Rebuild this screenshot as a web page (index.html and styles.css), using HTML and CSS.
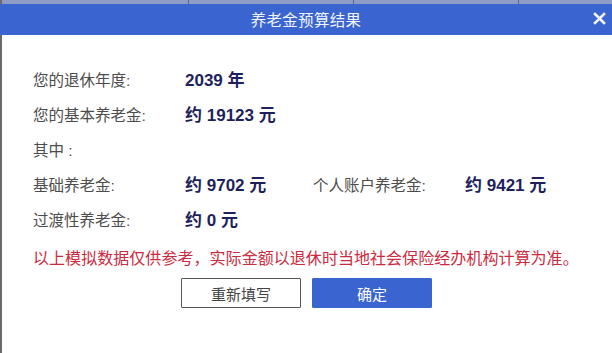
FILE: index.html
```html
<!DOCTYPE html>
<html lang="zh">
<head>
<meta charset="utf-8">
<title>养老金预算结果</title>
<link rel="stylesheet" href="styles.css">
</head>
<body>
<div class="dialog">
  <div class="topstrip"><span class="sep"></span><span class="sep"></span><span class="sep"></span></div>
  <div class="titlebar">
    <span class="title">养老金预算结果</span>
    <span class="close">
      <svg width="13" height="13" viewBox="0 0 13 13"><path d="M2 2 L11 11 M11 2 L2 11" stroke="#f4f6ff" stroke-width="2.6" stroke-linecap="square"/></svg>
    </span>
  </div>
  <div class="content">
    <div class="grid">
      <div class="label">您的退休年度:</div>
      <div class="value span3">2039 年</div>

      <div class="label">您的基本养老金:</div>
      <div class="value span3">约 19123 元</div>

      <div class="label span4">其中 :</div>

      <div class="label">基础养老金:</div>
      <div class="value">约 9702 元</div>
      <div class="label">个人账户养老金:</div>
      <div class="value">约 9421 元</div>

      <div class="label">过渡性养老金:</div>
      <div class="value span3">约 0 元</div>
    </div>
    <p class="note">以上模拟数据仅供参考，实际金额以退休时当地社会保险经办机构计算为准。</p>
    <div class="actions">
      <button class="btn btn-plain">重新填写</button>
      <button class="btn btn-primary">确定</button>
    </div>
  </div>
</div>
</body>
</html>
```

FILE: styles.css
```css
html, body {
  margin: 0;
  padding: 0;
  background: #ffffff;
}

body {
  width: 612px;
  height: 353px;
  overflow: hidden;
  font-family: "Liberation Sans", "Noto Sans CJK SC", sans-serif;
}

.dialog {
  height: 353px;
  border-left: 2px solid #6a6a6a;
  box-sizing: border-box;
  background: #ffffff;
}

.topstrip {
  height: 4px;
  background: #8e9cc6;
  display: flex;
  gap: 164px;
  padding-left: 186px;
}

.sep {
  width: 1px;
  background: #5a6690;
}

.titlebar {
  position: relative;
  height: 31px;
  background: #3a64d0;
  display: flex;
  align-items: center;
  justify-content: center;
  margin-left: -2px;
}

.title {
  color: #f3f6ff;
  font-size: 15.5px;
  letter-spacing: 0.3px;
  transform: translateY(-1px);
}

.close {
  position: absolute;
  right: 6px;
  top: 8px;
  display: flex;
}

.content {
  padding: 26px 0 0 31px;
}

.grid {
  display: grid;
  grid-template-columns: 152px 128px 152px auto;
  grid-auto-rows: 35px;
  align-items: center;
}

.span3 { grid-column: span 3; }
.span4 { grid-column: span 4; }

.label {
  color: #4c4c4c;
  font-size: 15.5px;
}

.value {
  color: #1e1f5c;
  font-size: 17px;
  font-weight: bold;
}

.note {
  margin: 5px 0 0 0;
  line-height: 35px;
  color: #cc2a3e;
  font-size: 16px;
  letter-spacing: 0.05px;
}

.actions {
  display: flex;
  gap: 11px;
  margin: 2px 0 0 148px;
}

.btn {
  width: 120px;
  height: 30px;
  font-family: "Liberation Sans", "Noto Sans CJK SC", sans-serif;
  font-size: 15px;
  border-radius: 1px;
  padding: 0;
  cursor: pointer;
}

.btn-plain {
  background: #ffffff;
  border: 1px solid #555555;
  color: #444444;
}

.btn-primary {
  background: #3a64d0;
  border: 1px solid #3a64d0;
  color: #ffffff;
}
```
